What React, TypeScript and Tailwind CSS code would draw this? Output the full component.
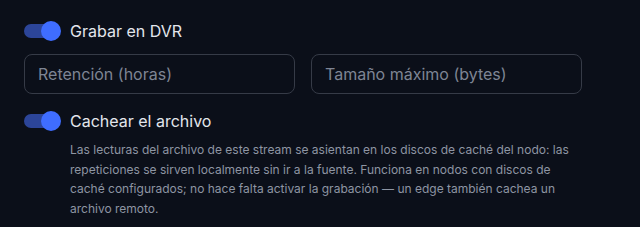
import { useState } from "react";

function Toggle({ on, onChange }: { on: boolean; onChange: () => void }) {
  return (
    <button
      type="button"
      onClick={onChange}
      className="relative flex h-5 w-[37px] shrink-0 items-center"
    >
      <span
        className={
          on
            ? "h-[14px] w-[34px] rounded-full bg-[#2c4599]"
            : "h-[14px] w-[34px] rounded-full bg-[#2a2f3a]"
        }
      />
      <span
        className={
          on
            ? "absolute right-0 top-0 h-5 w-5 rounded-full bg-[#3f6dff]"
            : "absolute left-0 top-0 h-5 w-5 rounded-full bg-[#9ca3af]"
        }
      />
    </button>
  );
}

export default function App() {
  const [dvr, setDvr] = useState(true);
  const [cache, setCache] = useState(true);

  return (
    <div
      className="min-h-[227px] w-full bg-[#0b0f19] px-6 pt-[21px] text-[#e3e6ec]"
      style={{ fontFamily: "Inter, 'Noto Sans', sans-serif" }}
    >
      <div className="flex items-center gap-[9px]">
        <Toggle on={dvr} onChange={() => setDvr(!dvr)} />
        <span className="text-base leading-5">Grabar en DVR</span>
      </div>

      <div className="mt-[13px] grid w-[558px] grid-cols-2 gap-4">
        <input
          placeholder="Retención (horas)"
          className="h-[40px] rounded-lg border border-[#363b47] bg-transparent px-[13px] text-base text-[#e3e6ec] placeholder-[#7e8594] outline-none"
        />
        <input
          placeholder="Tamaño máximo (bytes)"
          className="h-[40px] rounded-lg border border-[#363b47] bg-transparent px-[13px] text-base text-[#e3e6ec] placeholder-[#7e8594] outline-none"
        />
      </div>

      <div className="mt-[17px] flex items-center gap-[9px]">
        <Toggle on={cache} onChange={() => setCache(!cache)} />
        <span className="text-base leading-5">Cachear el archivo</span>
      </div>

      <p className="ml-[46px] mt-[9px] w-[506px] text-xs leading-[19.5px] text-[#8e95a3]">
        Las lecturas del archivo de este stream se asientan en los discos de caché del nodo: las
        repeticiones se sirven localmente sin ir a la fuente. Funciona en nodos con discos de
        caché configurados; no hace falta activar la grabación — un edge también cachea un
        archivo remoto.
      </p>
    </div>
  );
}
